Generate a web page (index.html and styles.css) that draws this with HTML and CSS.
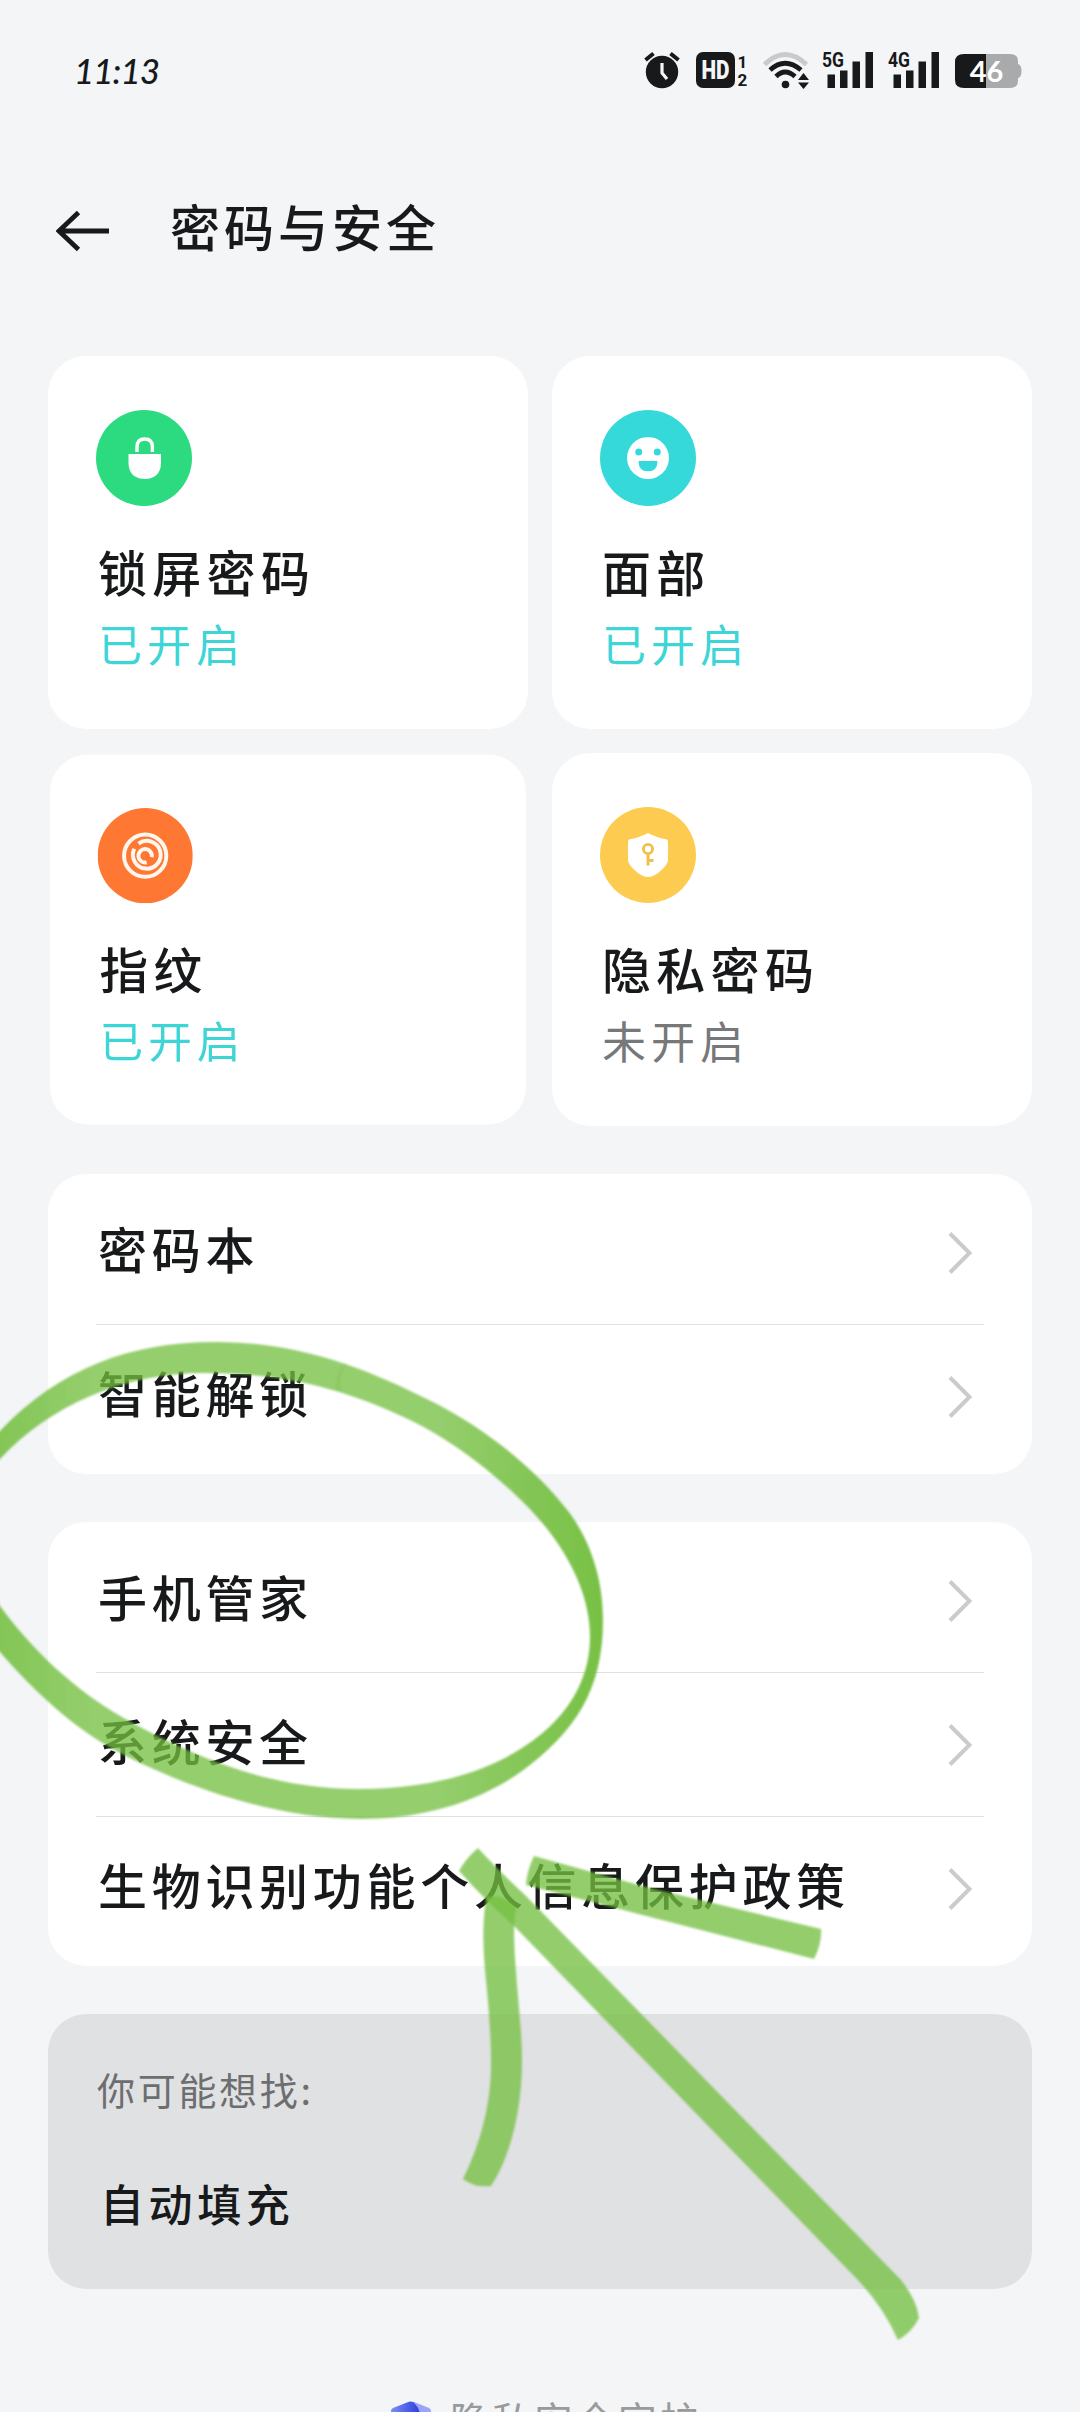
FILE: index.html
```html
<!DOCTYPE html>
<html lang="zh-CN">
<head>
<meta charset="utf-8">
<title>密码与安全</title>
<link rel="stylesheet" href="styles.css">
</head>
<body>
<div class="screen">
  <header class="status-bar">
    <time class="clock">11:13</time>
    <div class="indicators">
      <svg class="alarm" width="38" height="38" viewBox="0 0 38 38">
        <circle cx="18" cy="21" r="16.200"/>
        <path d="M1.500 9 9.500 2.500M34.500 9 26.500 2.500" stroke="#17191a" stroke-width="4"/>
        <path d="M18 12v10l5 6" fill="none" stroke="#f3f5f7" stroke-width="3.200"/>
      </svg>
      <svg class="hd" width="54" height="38" viewBox="0 0 54 38">
        <rect x="1" y="1" width="39" height="36" rx="7"/>
        <text class="glyph-hd" x="20.500" y="28" textLength="28" lengthAdjust="spacingAndGlyphs">HD</text>
        <text class="glyph-sim" x="47.500" y="16.500">1</text>
        <text class="glyph-sim" x="47.500" y="34.500">2</text>
      </svg>
      <svg class="wifi" width="48" height="38" viewBox="0 0 48 38">
        <g fill="none" stroke="#17191a" stroke-width="4.800">
          <path stroke="#c9cacc" d="M2.500 13.500Q23 -6.500 44.500 13.500"/>
          <path d="M8 19Q23 5.500 39 19"/>
          <path d="M14 25.500Q23 16.500 33 25.500"/>
        </g>
        <circle cx="23.500" cy="33.500" r="3.800"/>
        <path d="M36 29l5.500-7 5.500 7zM36 31.500h11l-5.500 6.500z"/>
      </svg>
      <svg class="signal" width="54" height="38" viewBox="0 0 54 38">
        <text class="glyph-net" x="1" y="15.500" textLength="22" lengthAdjust="spacingAndGlyphs">5G</text>
        <path d="M6.500 23.500h7.500V37H6.500zM19 19.500h7.500V37H19zM31.500 10.500H39V37h-7.500zM44.500 1H52V37h-7.500z"/>
      </svg>
      <svg class="signal" width="54" height="38" viewBox="0 0 54 38">
        <text class="glyph-net" x="1" y="15.500" textLength="22" lengthAdjust="spacingAndGlyphs">4G</text>
        <path d="M6.500 23.500h7.500V37H6.500zM19 19.500h7.500V37H19zM31.500 10.500H39V37h-7.500zM44.500 1H52V37h-7.500z"/>
      </svg>
      <svg class="battery" width="67" height="38" viewBox="0 0 67 38">
        <path d="M31 3h24q8 0 8 7v3q3.500 1 3.500 7t-3.500 7v3q0 7-8 7H31z" fill="#a9aaac"/>
        <path d="M31 3H9Q0 3 0 11v18q0 8 9 8h22z"/>
        <text class="glyph-battery" x="31.500" y="30.500">46</text>
      </svg>
    </div>
  </header>

  <div class="title-bar">
    <svg class="back" width="54" height="42" viewBox="0 0 54 42">
      <path d="M2 21H53M22.500 2.500 3 21 22.500 39.500" fill="none" stroke="#17191a" stroke-width="4.800"/>
    </svg>
    <h1>密码与安全</h1>
  </div>

  <main>
    <section class="cards">
      <article class="card">
        <svg class="badge" viewBox="0 0 96 96">
          <circle cx="48" cy="48" r="48" fill="#2cda80"/>
          <path d="M41 42v-5q0-8 7.700-8t7.700 8v5" fill="none" stroke="#fff" stroke-width="3.400"/>
          <path d="M32.500 44h32.500v9q0 8-5 12.500Q55 69 49 69q-6.500 0-11.500-3.500-5-4.500-5-12.500z" fill="#fff"/>
        </svg>
        <h2>锁屏密码</h2>
        <p class="on">已开启</p>
      </article>
      <article class="card">
        <svg class="badge" viewBox="0 0 96 96">
          <circle cx="48" cy="48" r="48" fill="#36d9d9"/>
          <circle cx="48" cy="48" r="21" fill="#fff"/>
          <g fill="#36d9d9">
            <circle cx="38.700" cy="42" r="3.500"/><circle cx="57.300" cy="42" r="3.500"/>
            <path d="M38.500 51h19q0 10.300-9.500 10.300T38.500 51z"/>
          </g>
        </svg>
        <h2>面部</h2>
        <p class="on">已开启</p>
      </article>
      <article class="card pressed">
        <svg class="badge" viewBox="0 0 96 96">
          <circle cx="48" cy="48" r="48" fill="#ff7833"/>
          <g fill="none" stroke="#fff6ee" stroke-width="4">
            <circle cx="48" cy="48" r="21.300"/>
            <path d="M41.300 35.800A14 14 0 1 1 37 41"/>
            <path d="M54.600 49.500A6.800 6.800 0 1 0 49.500 54.700"/>
          </g>
        </svg>
        <h2>指纹</h2>
        <p class="on">已开启</p>
      </article>
      <article class="card">
        <svg class="badge" viewBox="0 0 96 96">
          <circle cx="48" cy="48" r="48" fill="#fdcb50"/>
          <path d="M48 26q8 4.500 18 6.200 2 .4 2 2.300V53q0 4-6.500 10Q55 69.500 48 70q-7-.5-13.500-7Q28 57 28 53V34.500q0-1.900 2-2.300Q40 30.500 48 26z" fill="#fff"/>
          <g fill="none" stroke="#efc04b" stroke-width="2.900">
            <circle cx="48" cy="42" r="4.600"/><path d="M48 46.500V58.500M48 53.500h5.500"/>
          </g>
        </svg>
        <h2>隐私密码</h2>
        <p>未开启</p>
      </article>
    </section>

    <ul class="list">
      <li><span>密码本</span><svg class="chevron" viewBox="0 0 24 42"><path d="M2 1.500 21.500 21 2 40.500"/></svg></li>
      <li><span>智能解锁</span><svg class="chevron" viewBox="0 0 24 42"><path d="M2 1.500 21.500 21 2 40.500"/></svg></li>
    </ul>

    <ul class="list">
      <li><span>手机管家</span><svg class="chevron" viewBox="0 0 24 42"><path d="M2 1.500 21.500 21 2 40.500"/></svg></li>
      <li><span>系统安全</span><svg class="chevron" viewBox="0 0 24 42"><path d="M2 1.500 21.500 21 2 40.500"/></svg></li>
      <li><span>生物识别功能个人信息保护政策</span><svg class="chevron" viewBox="0 0 24 42"><path d="M2 1.500 21.500 21 2 40.500"/></svg></li>
    </ul>

    <section class="suggest">
      <p>你可能想找:</p>
      <a>自动填充</a>
    </section>
  </main>

  <footer class="footer">
    <svg width="40" height="44" viewBox="0 0 40 44">
      <defs>
        <linearGradient id="gem" x1="0" x2="1"><stop offset="0" stop-color="#7d8cf4"/><stop offset="1" stop-color="#2b3fdc"/></linearGradient>
      </defs>
      <path d="M22 .5 38 7q2 1 2 3v20L22 43z" fill="#9ba4fb"/>
      <path d="M0 10q0-2 2-3L18 .8q2-.8 4 .2 7 6 7 14v20l-9 8L2 34q-2-2-2-4z" fill="url(#gem)"/>
    </svg>
    <span>隐私安全守护</span>
  </footer>

  <!-- marker strokes drawn over the page -->
  <svg class="marker" width="1080" height="2412" viewBox="0 0 1080 2412">
    <defs>
      <linearGradient id="ink" gradientUnits="userSpaceOnUse" x1="0" y1="0" x2="604" y2="0">
        <stop offset="0" stop-color="#74bf40" stop-opacity=".88"/>
        <stop offset=".16" stop-color="#74bf40" stop-opacity=".76"/>
        <stop offset=".72" stop-color="#74bf40" stop-opacity=".76"/>
        <stop offset="1" stop-color="#74bf40" stop-opacity=".98"/>
      </linearGradient>
      <filter id="soft" filterUnits="userSpaceOnUse" x="-30" y="1300" width="1110" height="1100" color-interpolation-filters="sRGB"><feGaussianBlur stdDeviation="1.300"/></filter>
    </defs>
    <g filter="url(#soft)">
      <path fill="url(#ink)" d="M-12 1445 0 1431C60 1368 130 1342 216 1342C300 1342 365 1368 429 1400C484 1427 536 1469 568 1511C591 1541 603 1580 603 1620C603 1690 575 1732 522 1771C480 1801 425 1819 360 1819C280 1819 190 1789 122 1754C75 1730 35 1692 0 1652L-12 1638V1590L0 1606C32 1650 75 1690 122 1717C195 1758 270 1789 359 1789C410 1789 456 1780 490 1765C556 1736 590 1690 590 1637C590 1600 574 1565 551 1534C523 1496 463 1445 408 1419C345 1389 285 1373 204 1373C125 1373 50 1405 0 1459L-12 1472Z"/>
      <path fill="#74bf40" fill-opacity=".25" d="M345 1363Q334 1375 336 1390L342 1391Q338 1376 347 1363Z"/>
      <g fill="#74bf40" fill-opacity=".77">
        <path d="M478 1848Q466 1858 459 1871Q484 1899 515 1927L856 2278Q883 2306 898 2340Q912 2332 919 2318Q917 2300 901 2280L525 1895Q497 1869 478 1848Z"/>
        <path d="M486 1898C481 1935 484 1960 487 1990C490 2025 491 2040 491 2065C491 2105 480 2145 463 2179Q475 2188 491 2186C510 2158 522 2110 522 2061C522 2020 514 1975 514 1925L516 1908Q500 1892 486 1898Z"/>
        <path d="M534 1856Q527 1870 526 1885L814 1959Q822 1944 821 1929L646 1887 534 1856Z"/>
      </g>
    </g>
  </svg>
</div>
</body>
</html>
```
FILE: styles.css
```css
* { box-sizing: border-box; }
body, h1, h2, p, ul { margin: 0; padding: 0; }
body {
  background: #f3f5f7;
  color: #17191a;
  font-family: "Noto Sans CJK SC", sans-serif;
}
.screen {
  position: relative;
  width: 1080px;
  height: 2412px;
  overflow: hidden;
}
.status-bar {
  height: 140px;
  padding: 51px 58px 0 74px;
  display: flex;
  justify-content: space-between;
  align-items: flex-start;
}
.clock {
  font: italic 500 35px/38px Lato, sans-serif;
  letter-spacing: -1px;
}
.indicators { display: flex; fill: #17191a; }
.indicators svg { overflow: visible; }
.hd { margin-left: 13px; }
.wifi { margin-left: 13px; }
.signal { margin-left: 11px; }
.signal + .signal { margin-left: 12px; }
.battery { margin-left: 14px; }
.glyph-hd { font: 900 25px Roboto, sans-serif; fill: #f3f5f7; text-anchor: middle; }
.glyph-sim { font: 700 17px Roboto, sans-serif; text-anchor: middle; }
.glyph-net { font: 700 21px Roboto, sans-serif; }
.glyph-battery { font: 700 29px Lato, sans-serif; fill: #fff; text-anchor: middle; }

.title-bar {
  height: 216px;
  padding: 53px 58px 0 56px;
  display: flex;
  gap: 60px;
  align-items: flex-start;
}
.back { margin-top: 17px; }
.title-bar h1 {
  font-size: 50px;
  font-weight: 500;
  line-height: 64px;
  letter-spacing: 4px;
}

main {
  padding: 0 48px;
  display: flex;
  flex-direction: column;
  gap: 48px;
}
.cards {
  display: grid;
  grid-template-columns: 480px 480px;
  grid-auto-rows: 373px;
  gap: 24px;
}
.card {
  background: #fff;
  border-radius: 38px;
  padding: 54px 48px;
}
.pressed { transform: scale(.9917); }
.badge { display: block; width: 96px; height: 96px; }
.card h2 {
  margin: 30px 0 0 2px;
  font-size: 49px;
  font-weight: 500;
  line-height: 70px;
  letter-spacing: 5.300px;
}
.card p {
  margin: 4px 0 0 2px;
  font-size: 44px;
  line-height: 66px;
  letter-spacing: 5px;
  color: #77787a;
}
.card .on { color: #3dd5d6; }

.list {
  list-style: none;
  background: #fff;
  border-radius: 38px;
  padding: 6px 48px;
}
.list li {
  height: 144px;
  padding: 0 12px 0 2px;
  display: flex;
  align-items: center;
  justify-content: space-between;
  border-top: 1px solid transparent;
  background-clip: padding-box;
}
.list li + li { border-top-color: #dfe0e1; }
.list span {
  font-size: 49px;
  font-weight: 500;
  line-height: 70px;
  letter-spacing: 4.700px;
  margin-top: -10px;
}
.chevron {
  width: 24px;
  height: 42px;
  fill: none;
  stroke: #cbcbcc;
  stroke-width: 4;
}

.suggest {
  height: 275px;
  background: #e0e1e3;
  border-radius: 38px;
  padding: 45px 48px 0 49px;
}
.suggest p {
  font-size: 38px;
  line-height: 60px;
  letter-spacing: 2.700px;
  color: #6d6e70;
}
.suggest a {
  display: block;
  margin: 51px 0 0 3px;
  font-size: 44px;
  font-weight: 500;
  line-height: 66px;
  letter-spacing: 4.600px;
}
.footer {
  height: 11px;
  margin-top: 112px;
  padding-left: 391px;
  display: flex;
  gap: 19px;
}
.footer svg { flex: none; }
.footer span {
  margin-top: -11px;
  font-size: 39px;
  line-height: 56px;
  letter-spacing: 3px;
  white-space: nowrap;
  color: #999a9c;
}
.marker {
  position: absolute;
  left: 0;
  top: 0;
}
```
